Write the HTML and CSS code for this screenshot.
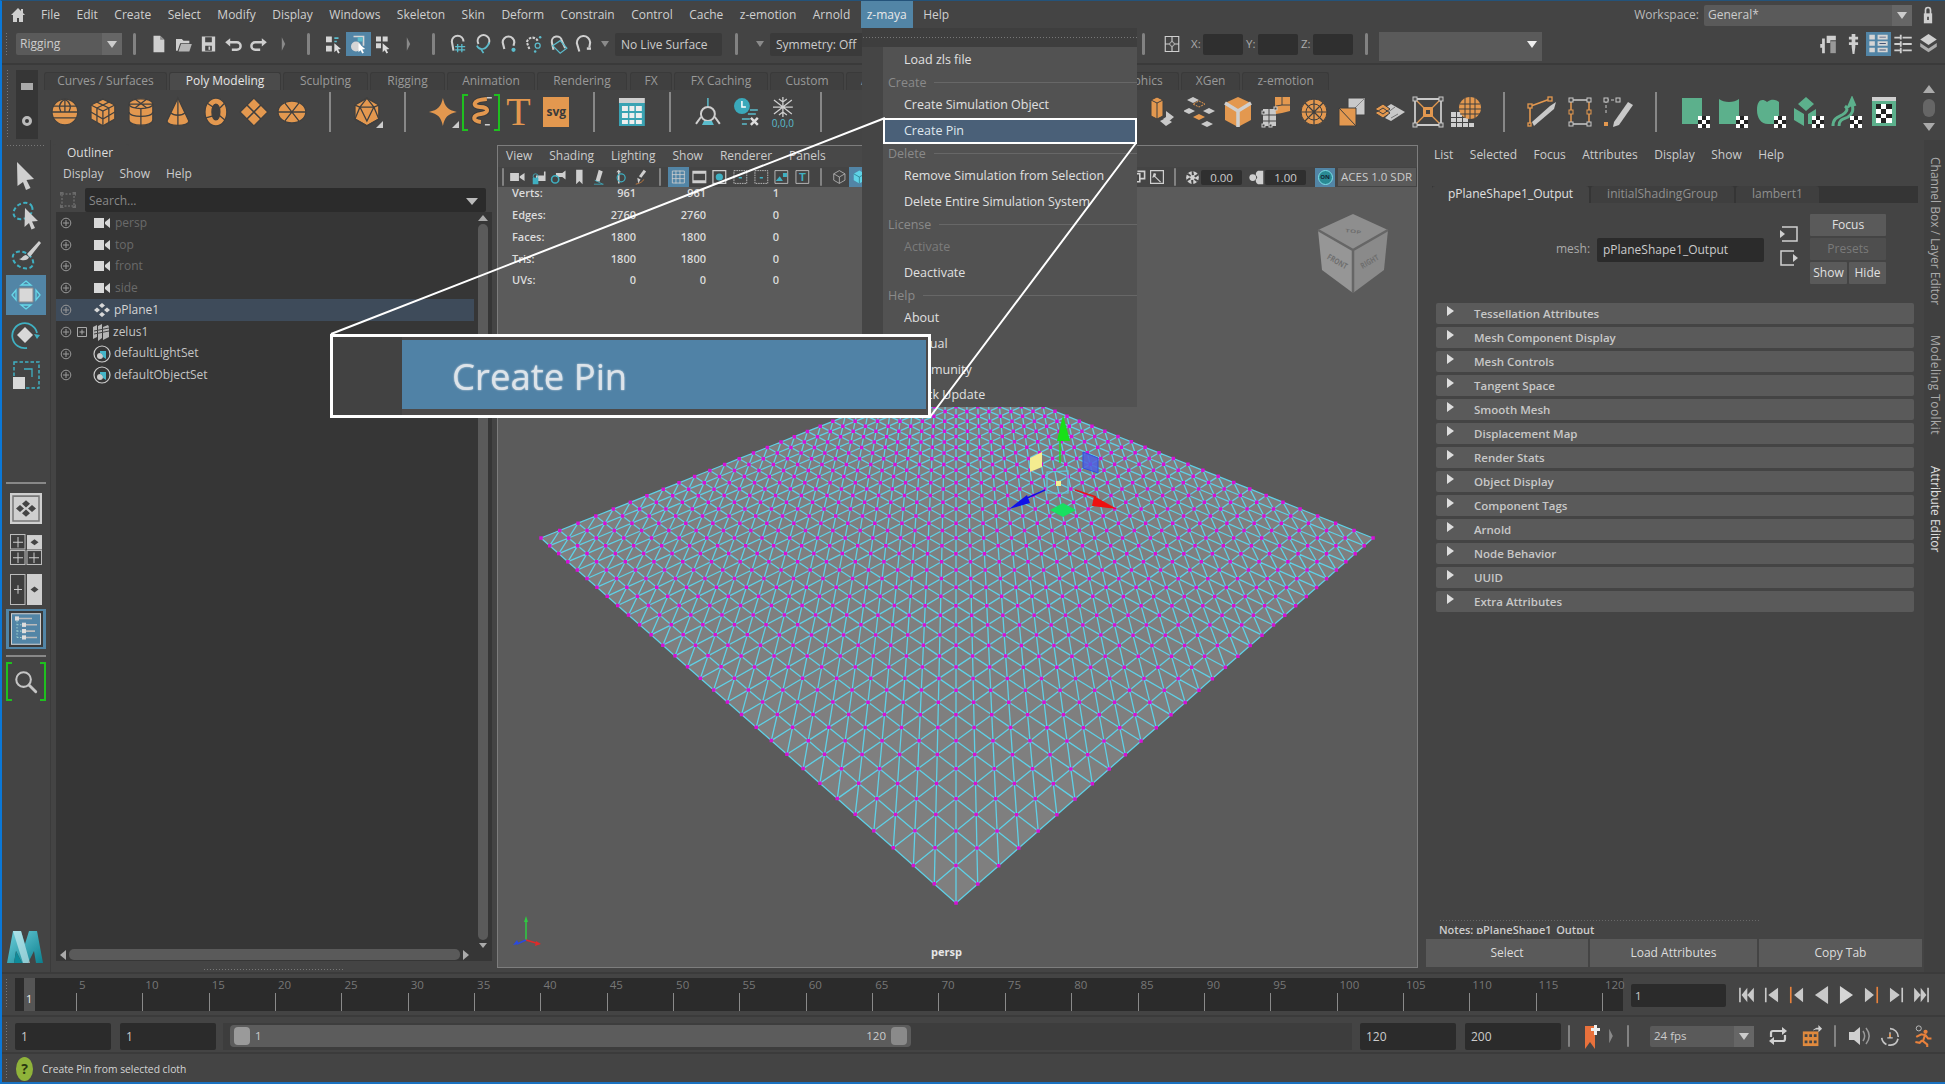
FILE: index.html
```html
<!DOCTYPE html>
<html lang="en">
<head>
<meta charset="utf-8">
<title>Autodesk Maya</title>
<link rel="stylesheet" href="styles.css">
</head>
<body>
<svg class="defs" aria-hidden="true">
<defs>
<linearGradient id="mgrad" x1="0" y1="0" x2="1" y2="1"><stop offset="0" stop-color="#6fd0dc"/><stop offset="1" stop-color="#0b7f8e"/></linearGradient>
</defs>
<symbol id="home" viewBox="0 0 16 16"><path fill="#cfcfcf" d="M8 1 1 8h2v7h4v-4h2v4h4V8h2l-2-2V2h-2v2z"/></symbol>
<symbol id="file" viewBox="0 0 24 24"><path fill="#cfcfcf" d="M6 2h8l5 5v15H6z"/><path fill="#8a8a8a" d="M14 2v5h5z"/></symbol>
<symbol id="open" viewBox="0 0 24 24"><path fill="#cfcfcf" d="M3 6h7l2 2h7v3H8l-3 9H3z"/><path fill="#b5b5b5" d="M9 12h13l-3 9H6z"/></symbol>
<symbol id="save" viewBox="0 0 24 24"><path fill="#cfcfcf" d="M4 3h16v18H4z"/><path fill="#444" d="M8 4h8v6H8zM8 14h8v6H8z"/><path fill="#cfcfcf" d="M12 15h2v4h-2z"/></symbol>
<symbol id="undo" viewBox="0 0 24 24"><path fill="none" stroke="#cfcfcf" stroke-width="3" d="M7 10h9a4 4 0 0 1 0 9h-6"/><path fill="#cfcfcf" d="M2 10l6-5v10z"/></symbol>
<symbol id="redo" viewBox="0 0 24 24"><path fill="none" stroke="#cfcfcf" stroke-width="3" d="M17 10H8a4 4 0 0 0 0 9h6"/><path fill="#cfcfcf" d="M22 10l-6-5v10z"/></symbol>
<symbol id="tri-r" viewBox="0 0 8 24"><path fill="#8a8a8a" d="M2 4l4 8-4 8z"/></symbol>
<symbol id="sel1" viewBox="0 0 24 24"><path fill="#d5d5d5" d="M3 3h7v7H3zM3 14h7v7H3z"/><path fill="#5bbccc" d="M13 4h5v2h-5zM13 8h3v2h-3z"/><path fill="#ddd" d="M13 11l8 7-3.500.5 2 4-2 1-2-4-2.500 2.500z"/></symbol>
<symbol id="sel2" viewBox="0 0 24 24"><path fill="none" stroke="#d5d5d5" stroke-width="2" d="M6 3h12v11"/><circle cx="9" cy="15" r="6" fill="#d5d5d5"/><path fill="#5bbccc" d="M11 4h6v5h-6z"/><path fill="#fff" d="M12 11l8 7-3.500.5 2 4-2 1-2-4-2.500 2.500z"/></symbol>
<symbol id="sel3" viewBox="0 0 24 24"><path fill="#d5d5d5" d="M3 3h6v6H3zM11 3h6v6h-6zM3 11h6v6H3z"/><path fill="#ddd" d="M11 11l8 7-3.500.5 2 4-2 1-2-4-2.500 2.500z"/></symbol>
<symbol id="magnet" viewBox="0 0 24 24"><path fill="none" stroke="#cfcfcf" stroke-width="2.500" d="M6 20 4 9a7 7 0 0 1 14 0"/><path fill="none" stroke="#5bbccc" stroke-width="1.500" d="M11 12v10M16 12v10M8 15h12M8 19h12"/></symbol>
<symbol id="magnet2" viewBox="0 0 24 24"><path fill="none" stroke="#cfcfcf" stroke-width="2.500" d="M6 12a7 7 0 1 1 12 0"/><path fill="none" stroke="#5bbccc" stroke-width="2" d="M4 14c3 6 11 6 15-4M9 18l3 5"/></symbol>
<symbol id="magnet3" viewBox="0 0 24 24"><path fill="none" stroke="#cfcfcf" stroke-width="2.500" d="M7 18 5 10a7 7 0 0 1 14 0l-1 4"/><circle cx="18" cy="19" r="2.500" fill="#5bbccc"/></symbol>
<symbol id="magnet4" viewBox="0 0 24 24"><path fill="none" stroke="#cfcfcf" stroke-width="2.500" stroke-dasharray="3 1.500" d="M7 18 4 10a7 7 0 0 1 13-2"/><circle cx="17" cy="14" r="3" fill="none" stroke="#5bbccc" stroke-width="1.500"/><circle cx="20" cy="4" r="1.500" fill="#5bbccc"/><circle cx="14" cy="21" r="1.500" fill="#5bbccc"/></symbol>
<symbol id="magnet5" viewBox="0 0 24 24"><path fill="none" stroke="#cfcfcf" stroke-width="2.500" d="M6 19 4 10a6 6 0 0 1 12-2l4 9"/><path fill="none" stroke="#5bbccc" stroke-width="1.500" d="M5 14l9-6 8 9-8 6z"/></symbol>
<symbol id="magnet6" viewBox="0 0 24 24"><path fill="none" stroke="#cfcfcf" stroke-width="2.500" d="M7 21 4 11a8 8 0 0 1 16-1l-1 6"/><path fill="#cfcfcf" d="M16 16h5v3h-5z"/></symbol>
<symbol id="coord" viewBox="0 0 24 24"><path fill="none" stroke="#cfcfcf" stroke-width="1.500" d="M3 2h18v20H3zM3 12h18M12 2v20"/><circle cx="12" cy="12" r="3" fill="#444" stroke="#cfcfcf"/></symbol>
<symbol id="panel1" viewBox="0 0 24 24"><path fill="#cfcfcf" d="M10 3h10v5h-6v3h-4zM5 6h3v16H5V16H3v-4h2z"/><path fill="#999" d="M14 9h6v13h-6z"/></symbol>
<symbol id="panel2" viewBox="0 0 24 24"><path fill="#cfcfcf" d="M10 1h4v3h3v3h-3v3h3v3h-3v2l-1 8h-2l-1-8v-2H7v-3h3V7H7V4h3z"/></symbol>
<symbol id="panel3" viewBox="0 0 24 24"><path fill="#d5d5d5" d="M2 2h6v5H2zM2 9h6v5H2zM2 16h6v5H2zM11 2h11v5H11zM11 9h11v5H11zM11 16h11v5H11z"/><path fill="#457" d="M13 4h7v1h-7zM13 11h7v1h-7zM13 18h7v1h-7z"/></symbol>
<symbol id="panel4" viewBox="0 0 24 24"><path fill="#cfcfcf" d="M2 4h6v2H2zM11 4h10v2H11zM2 11h6v2H2zM11 11h10v2H11zM2 18h6v2H2zM11 18h10v2H11zM8 2v5h2V2zM8 9v6h2V9zM8 16v6h2v-6z"/></symbol>
<symbol id="panel5" viewBox="0 0 24 24"><path fill="#cfcfcf" d="M12 1l9 6-9 6-9-6z"/><path fill="#aaa" d="M3 11l9 6 9-6v4l-9 6-9-6z"/></symbol>
<symbol id="lock" viewBox="0 0 14 24"><path fill="none" stroke="#cfcfcf" stroke-width="2" d="M4 11V6a3 3 0 0 1 6 0v5"/><path fill="#cfcfcf" d="M2 10h10v12H2z"/><path fill="#444" d="M6 14h2v4H6z"/></symbol>

<symbol id="p-sphere" viewBox="0 0 32 32"><g fill="#e3984f" stroke="#3f3f3f" stroke-width="1.300"><circle cx="16" cy="16" r="13"/><path fill="none" d="M4 10h24M3 16h26M4 22h24M16 3c-6 4-7 8-4 13M16 3c6 4 7 8 4 13M16 3v13"/></g></symbol>
<symbol id="p-cube" viewBox="0 0 32 32"><g fill="#e3984f" stroke="#3f3f3f" stroke-width="1.300"><path d="M16 3l12 6v14l-12 7-12-7V9z"/><path fill="none" d="M4 9l12 6 12-6M16 15v15M10 6l12 6M22 6 10 12M4 16l12 7 12-7M10 12v15M22 12v15"/></g></symbol>
<symbol id="p-cyl" viewBox="0 0 32 32"><g fill="#e3984f" stroke="#3f3f3f" stroke-width="1.300"><path d="M4 8c0-7 24-7 24 0v16c0 7-24 7-24 0z"/><path fill="none" d="M4 8c0 6 24 6 24 0M4 16c0 6 24 6 24 0M4 8l24 0M10 3l12 9M22 3 10 12M16 12v19"/></g></symbol>
<symbol id="p-cone" viewBox="0 0 32 32"><g fill="#e3984f" stroke="#3f3f3f" stroke-width="1.300"><path d="M16 2 27 25c0 6-22 6-22 0z"/><path fill="none" d="M16 2v28M9 17c3 3 11 3 14 0"/></g></symbol>
<symbol id="p-torus" viewBox="0 0 32 32"><g fill="#e3984f" stroke="#3f3f3f" stroke-width="1.300"><ellipse cx="16" cy="16" rx="11" ry="14"/><ellipse cx="16" cy="16" rx="4" ry="8" fill="#3f3f3f"/><path fill="none" d="M7 7l6 4M25 7l-5 5M6 22l7-2M25 24l-6-5"/></g></symbol>
<symbol id="p-plane" viewBox="0 0 32 32"><g fill="#e3984f" stroke="#3f3f3f" stroke-width="1.300"><path d="M16 2l14 14-14 14L2 16z"/><path fill="none" stroke-width="1.600" d="M9 9l14 14M23 9 9 23"/></g></symbol>
<symbol id="p-disc" viewBox="0 0 32 32"><g fill="#e3984f" stroke="#3f3f3f" stroke-width="1.300"><ellipse cx="16" cy="16" rx="14" ry="11"/><path fill="none" d="M2 16h28M9 7l14 18M23 7 9 25"/></g></symbol>
<symbol id="p-ico" viewBox="0 0 32 32"><g fill="#e3984f" stroke="#3f3f3f" stroke-width="1.300"><path d="M16 2l12 7v14l-12 7-12-7V9z"/><path fill="none" d="M16 2 9 11h14zM9 11 16 25l7-14M4 9l5 2-5 12 12 7 12-7-5-12 5-2"/></g></symbol>
<symbol id="p-star" viewBox="0 0 32 32"><path fill="#e3984f" d="M16 2c2 9 5 12 14 14-9 2-12 5-14 14-2-9-5-12-14-14 9-2 12-5 14-14z"/></symbol>
<symbol id="p-helix" viewBox="0 0 32 32"><path fill="none" stroke="#3a3a3a" stroke-width="6" d="M22 3C6 4 8 11 15 11c9 0 10 6 1 7-8 1-10 7 0 8"/><path fill="none" stroke="#e3984f" stroke-width="4" d="M22 3C6 4 8 11 15 11c9 0 10 6 1 7-8 1-10 7 0 8"/><path fill="#cfcfcf" d="M20 28h5v1.500h-5zM22 1h5v1.500h-5z"/></symbol>
<symbol id="p-table" viewBox="0 0 32 32"><path fill="#cfcfcf" d="M3 2h26v5H3z"/><path fill="#3aa3b3" d="M3 7h26v23H3z"/><path fill="#eee" d="M6 10h6v5H6zM13.500 10h5v5h-5zM20 10h6v5h-6zM6 17h6v5H6zM13.500 17h5v5h-5zM20 17h6v5h-6zM6 24h6v4H6zM13.500 24h5v4h-5zM20 24h6v4h-6z"/></symbol>
<symbol id="p-bio" viewBox="0 0 32 32"><path fill="none" stroke="#5bbccc" stroke-width="1.500" d="M16 2v10"/><circle cx="16" cy="18" r="7" fill="none" stroke="#cfcfcf" stroke-width="2"/><path fill="none" stroke="#cfcfcf" stroke-width="2" d="M9 21l-5 7M23 21l5 7"/><path fill="#5bbccc" d="M12 25h8l2 4H10z"/></symbol>
<symbol id="p-clock" viewBox="0 0 32 32"><circle cx="12" cy="10" r="8" fill="#3aa9bb"/><path fill="none" stroke="#fff" stroke-width="1.500" d="M12 5v6h4"/><path fill="none" stroke="#5bbccc" stroke-width="1.500" d="M20 14h8M18 18h8M12 23h8M12 28h5"/><path fill="none" stroke="#ddd" stroke-width="2.500" d="M21 22l7 7M28 22l-7 7"/></symbol>
<symbol id="p-snow" viewBox="0 0 32 32"><path fill="none" stroke="#cfcfcf" stroke-width="1.300" d="M16 1v20M7 4l18 14M25 4 7 18M6 11h20M12 3l4 3 4-3M12 19l4-3 4 3"/><text x="16" y="31" text-anchor="middle" font-family="Open Sans" font-size="10" fill="#5bbccc">0,0,0</text></symbol>
<symbol id="r-a" viewBox="0 0 32 32"><path fill="#e3984f" stroke="#3f3f3f" d="M5 4l6-3 6 3v16l-6 3-6-3z"/><path fill="none" stroke="#3f3f3f" d="M5 4l6 3 6-3M11 7v16"/><path fill="#c9c9c9" d="M20 15l8 6-6 5-5-3 3-2zM14 25l6-3 6 4-6 4z"/></symbol>
<symbol id="r-b" viewBox="0 0 32 32"><path fill="#c9c9c9" d="M9 1l6 3-6 3-6-3zM5 12l6 3-6 3-6-3zM25 12l6 3-6 3-6-3zM23 25l6 3-6 3-6-3z"/><path fill="#e3984f" d="M15 18l6 3-6 3-6-3z"/><path fill="none" stroke="#e3984f" stroke-dasharray="2 1" d="M15 5l6 3-6 3-6-3z"/></symbol>
<symbol id="r-c" viewBox="0 0 32 32"><path fill="#e3984f" d="M16 1l13 6v17l-13 7-13-7V7z"/><path fill="none" stroke="#cfcfcf" stroke-width="3.500" d="M3 7l13 8 13-8M16 15v16"/></symbol>
<symbol id="r-d" viewBox="0 0 32 32"><path fill="#c9c9c9" d="M3 13h13v17H3z"/><path fill="none" stroke="#444" d="M3 19h13M3 25h13M9 13v17"/><path fill="#e3984f" d="M15 1h15v14l-8 2-6 1-1-10zM22 1"/><path fill="none" stroke="#444" d="M22 1v8l-6 1M22 9h8"/><g fill="#444" stroke="#cfcfcf"><rect x="2" y="15" width="3" height="3"/><rect x="2" y="28" width="3" height="3"/><rect x="9" y="28" width="3" height="3"/><rect x="14" y="11" width="3" height="3"/></g></symbol>
<symbol id="r-e" viewBox="0 0 32 32"><circle cx="16" cy="16" r="13" fill="#e3984f" stroke="#3f3f3f"/><circle cx="16" cy="16" r="8" fill="none" stroke="#3f3f3f"/><path fill="none" stroke="#3f3f3f" stroke-width="1.200" d="M3 16h26M16 3v26M7 7l18 18M25 7 7 25"/></symbol>
<symbol id="r-f" viewBox="0 0 32 32"><path fill="#c9c9c9" stroke="#3f3f3f" d="M12 2h17v17H12z"/><path fill="none" stroke="#888" d="M12 19 29 2"/><path fill="#e3984f" stroke="#3f3f3f" d="M3 12h17v18H3z"/><path fill="none" stroke="#3f3f3f" d="M3 12l17 18"/></symbol>
<symbol id="r-g" viewBox="0 0 32 32"><path fill="#c9c9c9" d="M17 8l14 8-14 9-6-3 3-3-3-2 3-2-3-3z"/><path fill="none" stroke="#777" d="M21 11l-8 6M24 18l-7 4"/><path fill="#e3984f" stroke="#3f3f3f" d="M1 17l8-5 7 5-7 5zM1 13l8-5 7 5-7 5z"/></symbol>
<symbol id="r-h" viewBox="0 0 32 32"><path fill="none" stroke="#c9c9c9" stroke-width="1.800" d="M3 3h26v26H3z"/><path fill="none" stroke="#e3984f" stroke-width="1.300" d="M4 4l8 8M28 4l-8 8M4 28l8-8M28 28l-8-8"/><path fill="#e3984f" d="M11 11h10v10H11z"/><path fill="#444" d="M14 14h4v4h-4z"/><g fill="#555" stroke="#c9c9c9"><rect x="1" y="1" width="4" height="4"/><rect x="27" y="1" width="4" height="4"/><rect x="1" y="27" width="4" height="4"/><rect x="27" y="27" width="4" height="4"/></g></symbol>
<symbol id="r-i" viewBox="0 0 32 32"><path fill="#d0d0d0" d="M1 16h5v5H1zM7 16h5v5H7zM1 22h5v4H1zM7 22h5v4H7zM13 22h5v4h-5zM1 27h5v4H1zM7 27h5v4H7zM13 27h5v4h-5zM19 27h5v4h-5z"/><circle cx="20" cy="12" r="11" fill="#e3984f"/><path fill="none" stroke="#3f3f3f" d="M10 8h20M9 13h22M10 18h20M15 2v20M20 1v22M25 2v20"/></symbol>
<symbol id="r-j" viewBox="0 0 32 32"><path fill="none" stroke="#e3984f" stroke-width="1.600" d="M5 10 24 3M4 10v20"/><path fill="#c9c9c9" d="M6 26 24 10l6-4-2 7-20 17z"/><g fill="#444" stroke="#e3984f" stroke-width="1.300"><rect x="2" y="8" width="4" height="4"/><rect x="22" y="1" width="4" height="4"/><rect x="2" y="27" width="3" height="3"/></g></symbol>
<symbol id="r-k" viewBox="0 0 32 32"><path fill="none" stroke="#c9c9c9" stroke-width="1.500" d="M9 4h14M9 28h14"/><path fill="none" stroke="#e3984f" stroke-width="1.500" d="M7 4v24M25 4v24"/><g fill="#444" stroke="#c9c9c9"><rect x="5" y="2" width="4" height="4"/><rect x="23" y="2" width="4" height="4"/><rect x="5" y="26" width="4" height="4"/><rect x="23" y="26" width="4" height="4"/><rect x="5" y="14" width="4" height="4" stroke="#e3984f"/><rect x="23" y="14" width="4" height="4" stroke="#e3984f"/></g></symbol>
<symbol id="r-l" viewBox="0 0 32 32"><path fill="none" stroke="#c9c9c9" stroke-dasharray="3 2" d="M4 4h12M4 4v14"/><g fill="#444" stroke="#c9c9c9"><rect x="2" y="2" width="4" height="4"/><rect x="14" y="2" width="4" height="4"/></g><path fill="#e3984f" d="M2 26h4v4H2z"/><path fill="#c9c9c9" d="M12 26 26 6l5 3-14 20-6 2z"/></symbol>
<symbol id="g-a" viewBox="0 0 32 32"><path fill="#5cb08c" d="M4 2h20v26H4z"/><path fill="#fff" d="M20 20h4v4h-4zM28 20h4v4h-4zM24 24h4v4h-4zM20 28h4v4h-4zM28 28h4v4h-4z"/><path fill="#222" d="M24 20h4v4h-4zM20 24h4v4h-4zM28 24h4v4h-4zM24 28h4v4h-4z"/></symbol>
<symbol id="g-b" viewBox="0 0 32 32"><path fill="#5cb08c" d="M3 3c5 4 15 4 20 0v25H3z"/><path fill="#fff" d="M20 20h4v4h-4zM28 20h4v4h-4zM24 24h4v4h-4zM20 28h4v4h-4zM28 28h4v4h-4z"/><path fill="#222" d="M24 20h4v4h-4zM20 24h4v4h-4zM28 24h4v4h-4zM24 28h4v4h-4z"/></symbol>
<symbol id="g-c" viewBox="0 0 32 32"><path fill="#5cb08c" d="M3 14C3 4 8 2 13 6c5-4 10-2 12 0v22H14C7 28 3 22 3 14z"/><path fill="#fff" d="M20 20h4v4h-4zM28 20h4v4h-4zM24 24h4v4h-4zM20 28h4v4h-4zM28 28h4v4h-4z"/><path fill="#222" d="M24 20h4v4h-4zM20 24h4v4h-4zM28 24h4v4h-4zM24 28h4v4h-4z"/></symbol>
<symbol id="g-d" viewBox="0 0 32 32"><path fill="#5cb08c" d="M14 1l8 7-8 7-8-7zM2 12l10 6v12L2 24zM16 18l8-5v7h-4v8h-4z"/><path fill="#fff" d="M20 20h4v4h-4zM28 20h4v4h-4zM24 24h4v4h-4zM20 28h4v4h-4zM28 28h4v4h-4z"/><path fill="#222" d="M24 20h4v4h-4zM20 24h4v4h-4zM28 24h4v4h-4zM24 28h4v4h-4z"/></symbol>
<symbol id="g-e" viewBox="0 0 32 32"><path fill="none" stroke="#5cb08c" stroke-width="3" d="M3 30c0-8 5-9 9-11s7-6 3-9M9 30c0-7 5-7 9-9 4-3 6-6 4-13l-3 2 3-7 3 7"/><path fill="#fff" d="M20 20h4v4h-4zM28 20h4v4h-4zM24 24h4v4h-4zM20 28h4v4h-4zM28 28h4v4h-4z"/><path fill="#222" d="M24 20h4v4h-4zM20 24h4v4h-4zM28 24h4v4h-4zM24 28h4v4h-4z"/></symbol>
<symbol id="g-f" viewBox="0 0 32 32"><path fill="#cfcfcf" d="M4 1h24v4H4z"/><path fill="#5cb08c" d="M4 5h24v25H4z"/><path fill="#fff" d="M8 8h16v19H8z"/><path fill="#222" d="M8 8h5v5H8zM18 8h6v5h-6zM13 13h5v5h-5zM8 18h5v4H8zM18 18h6v4h-6zM13 22h5v5h-5z"/></symbol>

<symbol id="cam" viewBox="0 0 16 10"><path fill="#d8d8d8" d="M0 0h10v10H0zM11 4l5-4v10l-5-4z"/></symbol>
<symbol id="plane" viewBox="0 0 18 14"><path fill="#d8d8d8" d="M9 0l3 2.500L9 5 6 2.500zM4 4.500 7 7 4 9.500 1 7zM14 4.500 17 7l-3 2.500L11 7zM9 9l3 2.500L9 14l-3-2.500z"/></symbol>
<symbol id="zelus" viewBox="0 0 18 18"><path fill="#b5b5b5" d="M1 4l4-2v12l-4 2zM6 3l4-2v14l-4 3zM11 4l5-2 1 2v10l-6 3z"/><path fill="none" stroke="#444" d="M2 8l15-3M2 11l15-3"/></symbol>
<symbol id="set" viewBox="0 0 18 18"><circle cx="9" cy="9" r="8" fill="none" stroke="#ccc" stroke-width="1.200"/><circle cx="7" cy="11" r="3" fill="#ccc"/><path fill="#45b5c8" d="M7 6h6v8l-3-2a4 4 0 0 0-3-4z"/></symbol>
<symbol id="pluscirc" viewBox="0 0 12 12"><circle cx="6" cy="6" r="4.800" fill="none" stroke="#999"/><path stroke="#999" d="M6 3v6M3 6h6"/></symbol>
<symbol id="plusbox" viewBox="0 0 12 12"><path fill="none" stroke="#aaa" d="M1.500 1.500h9v9h-9zM6 3.500v5M3.500 6h5"/></symbol>
<symbol id="focus" viewBox="0 0 18 18"><path fill="none" stroke="#6a6a6a" stroke-width="1.500" stroke-dasharray="2 1.500" d="M3 3h12v12H3z"/><path fill="#6a6a6a" d="M1 1l4 0-4 4zM17 1v4l-4-4zM1 17v-4l4 4zM17 17h-4l4-4z"/></symbol>

<symbol id="t-arrow" viewBox="0 0 32 32"><path fill="#cfcfcf" d="M7 3 24 20l-7.500 1 4 8-4.500 2-3-8-5.500 4z"/></symbol>
<symbol id="t-lasso" viewBox="0 0 32 32"><ellipse cx="13" cy="12" rx="10" ry="7.500" transform="rotate(-30 13 12)" fill="none" stroke="#3fb0c2" stroke-width="2" stroke-dasharray="4 2.500"/><path fill="#cfcfcf" d="M15 9l13 13-6 .6 3 6.400-3.500 1.500-2.500-6.500-4.500 4z"/></symbol>
<symbol id="t-paint" viewBox="0 0 32 32"><ellipse cx="13" cy="21" rx="11" ry="7.500" transform="rotate(30 13 21)" fill="none" stroke="#3fb0c2" stroke-width="2" stroke-dasharray="4 2.500"/><path fill="#cfcfcf" d="M29 2 17 15l3 3L31 4zM16 16c-3 0-4 4-7 4 3 2 9 2 10-2z"/></symbol>
<symbol id="t-move" viewBox="0 0 32 32"><path fill="none" stroke="#66d7e8" stroke-width="1.300" d="M16 2l5 4H11zM16 30l5-4H11zM2 16l4-5v10zM30 16l-4-5v10z"/><path fill="#d8d8d8" stroke="#8a8a8a" d="M9 9h14v14H9z"/></symbol>
<symbol id="t-rot" viewBox="0 0 32 32"><path fill="none" stroke="#3fb0c2" stroke-width="1.800" d="M27 14A12.500 12.500 0 1 0 17 29"/><path fill="#3fb0c2" d="M30 16l-6-1 3 5z"/><path fill="#d8d8d8" d="M15 8l8 8-8 8-8-8z"/></symbol>
<symbol id="t-scale" viewBox="0 0 32 32"><path fill="none" stroke="#3fb0c2" stroke-width="1.500" stroke-dasharray="3.500 2" d="M4 3h25v26H4z"/><path fill="none" stroke="#3fb0c2" stroke-width="1.300" d="M14 10h8v8"/><path fill="#d8d8d8" d="M3 18h12v12H3z"/></symbol>
<symbol id="l-single" viewBox="0 0 32 30" preserveAspectRatio="none"><path fill="#cfcfcf" d="M0 0h32v30H0z"/><path fill="none" stroke="#777" stroke-width="1.500" d="M3 3h26v24H3z"/><path fill="#444" d="M16 7l4 3.500-4 3.500-4-3.500zM10 11.500l4 3.500-4 3.500-4-3.500zM22 11.500l4 3.500-4 3.500-4-3.500zM16 16l4 3.500-4 3.500-4-3.500z"/></symbol>
<symbol id="l-four" viewBox="0 0 32 30" preserveAspectRatio="none"><g fill="#3e3e3e" stroke="#bbb"><rect x=".5" y=".5" width="14.500" height="14"/><rect x=".5" y="16" width="14.500" height="13.500"/><rect x="17" y="16" width="14.500" height="13.500"/></g><path fill="#cfcfcf" d="M17 1h15v14H17z"/><path fill="#444" d="M24.500 5l4 3-4 3-4-3z"/><path stroke="#ccc" d="M8 3v10M3 8h10M8 18v10M3 23h10M24 18v10M19 23h10"/></symbol>
<symbol id="l-two" viewBox="0 0 32 30" preserveAspectRatio="none"><path fill="#3e3e3e" stroke="#bbb" d="M.5.5h14.500v29H.5z"/><path stroke="#ccc" d="M8 11v8M4 15h8"/><path fill="#cfcfcf" d="M17 0h15v30H17z"/><path fill="#444" d="M24.500 12l4 3-4 3-4-3z"/></symbol>
<symbol id="l-out" viewBox="0 0 40 38" preserveAspectRatio="none"><path fill="none" stroke="#3a3a3a" stroke-width="2" d="M4 3h32v32H4z"/><path fill="none" stroke="#cfcfcf" d="M5.500 4.500h29v29h-29z"/><path stroke="#bbb" stroke-width="1.500" d="M11 9h15M17 15h14M17 21h12M17 27h14"/><path stroke="#9cc" stroke-dasharray="1.500 1.500" d="M11 11v16M11 15h5M11 21h5M11 27h5"/><g fill="#ddd"><rect x="9" y="7" width="4" height="4"/><rect x="16" y="13" width="4" height="4"/><rect x="16" y="19" width="4" height="4"/><rect x="16" y="25" width="4" height="4"/></g></symbol>
<symbol id="search" viewBox="0 0 32 32"><circle cx="13" cy="13" r="9" fill="none" stroke="#c5c5c5" stroke-width="2.500"/><path stroke="#c5c5c5" stroke-width="3.500" stroke-linecap="round" d="M20 20l8 8"/></symbol>
<symbol id="mlogo" viewBox="0 0 36 32"><path fill="url(#mgrad)" d="M0 32 6 0h8l4 13 4-13h8l6 32h-7l-2-12-6 12h-6L9 20 7 32z"/><path fill="#0f8a99" d="M7 32 9 20l6 12z"/><path fill="#d8f2f5" opacity=".6" d="M6 0h8l9 32h-7z"/></symbol>

<symbol id="v1" viewBox="0 0 20 20"><path fill="#cfcfcf" d="M1 5h11v10H1zM13 9l6-4v10l-6-4z"/></symbol>
<symbol id="v2" viewBox="0 0 20 20"><path fill="#cfcfcf" d="M7 8h10V3h2v12H7zM7 8l-5 2"/><path fill="#3fb0c2" d="M3 11h7v8H3z"/><circle cx="6.500" cy="9" r="3" fill="none" stroke="#3fb0c2"/></symbol>
<symbol id="v3" viewBox="0 0 20 20"><path fill="#cfcfcf" d="M7 5h8l4-3v11l-4-3H7z"/><circle cx="6" cy="13" r="4.500" fill="none" stroke="#3fb0c2" stroke-width="2"/></symbol>
<symbol id="v4" viewBox="0 0 20 20"><path fill="#cfcfcf" d="M6 1h8v18l-4-4-4 4z"/></symbol>
<symbol id="v5" viewBox="0 0 20 20"><path fill="#cfcfcf" d="M8 1l5 2-4 13-5-1z"/><path fill="none" stroke="#3fb0c2" d="M2 19h12M3 14l10 5"/></symbol>
<symbol id="v6" viewBox="0 0 20 20"><path fill="#cfcfcf" d="M8 1l3 3H9v14H7V4H5z"/><circle cx="11" cy="11" r="5" fill="none" stroke="#3fb0c2" stroke-width="1.500"/></symbol>
<symbol id="v7" viewBox="0 0 20 20"><path fill="#cfcfcf" d="M13 1l3 2-6 8-3-2z"/><path fill="none" stroke="#d0803c" d="M3 19c5-1 9-3 10-6"/><path fill="#cfcfcf" d="M5 11l4 2-3 5z"/></symbol>
<symbol id="v8" viewBox="0 0 20 20"><path fill="none" stroke="#cfcfcf" d="M2.500 2.500h15v15h-15zM2 7h16M2 12h16M7 2v16M12 2v16"/></symbol>
<symbol id="v9" viewBox="0 0 20 20"><path fill="none" stroke="#cfcfcf" stroke-width="1.500" d="M2 3h16v14H2z"/><path fill="#cfcfcf" d="M2 3h16v3H2zM2 14h16v3H2z"/></symbol>
<symbol id="v10" viewBox="0 0 20 20"><path fill="none" stroke="#cfcfcf" stroke-width="1.500" d="M2 2h16v16H2z"/><circle cx="10" cy="10" r="4.500" fill="#3fb0c2"/></symbol>
<symbol id="v11" viewBox="0 0 20 20"><path fill="none" stroke="#cfcfcf" stroke-dasharray="2 1" d="M2 2h16v16H2z"/><path fill="#3fb0c2" d="M8 10h4v2H8z"/></symbol>
<symbol id="v12" viewBox="0 0 20 20"><path fill="none" stroke="#cfcfcf" d="M2 2h16v16H2z"/><path fill="#3fb0c2" d="M3 15l5-6 4 6zM12 5h5v5h-5z"/></symbol>
<symbol id="v13" viewBox="0 0 20 20"><path fill="none" stroke="#cfcfcf" d="M2 2h16v16H2z"/><text x="10" y="15" text-anchor="middle" font-family="Liberation Sans" font-size="14" font-weight="700" fill="#3fb0c2">T</text></symbol>
<symbol id="v14" viewBox="0 0 20 20"><path fill="none" stroke="#bbb" d="M10 2l7 4v8l-7 4-7-4V6zM3 6l7 4 7-4M10 10v8"/></symbol>
<symbol id="v15" viewBox="0 0 20 20"><path fill="#5fd3e6" d="M10 2l7 4v8l-7 4-7-4V6z"/><path fill="none" stroke="#2c7c8c" d="M3 6l7 4 7-4M10 10v8"/></symbol>
<symbol id="v-a" viewBox="0 0 20 20"><path fill="none" stroke="#cfcfcf" stroke-width="2" d="M2 6h9v10H2zM8 3h9v9h-5"/></symbol>
<symbol id="v-b" viewBox="0 0 20 20"><path fill="none" stroke="#cfcfcf" stroke-width="1.500" d="M2 2h16v16H2z"/><path fill="#cfcfcf" d="M6 5l3 1-1 3 7 7-1 1-7-7-3 1z"/></symbol>
<symbol id="v-ap" viewBox="0 0 20 20"><circle cx="10" cy="10" r="8.500" fill="#d0d0d0"/><path fill="#444" d="M9 1.500h2l1 5-3 .5zM17 5l1 2-4 3-2-2zM18 14l-2 2-4-3 1-2zM11 18.500H9l-1-5 3-.5zM3 15l-1-2 4-3 2 2zM2 6l2-2 4 3-1 2z"/></symbol>
<symbol id="v-g" viewBox="0 0 20 20"><path fill="#d0d0d0" d="M12 1h7v18h-7c-3-2-3-4-3-5 0-2 2-3 2-4s-2-3-2-4c0-2 1-4 3-5z"/><circle cx="5" cy="10" r="4.500" fill="#d0d0d0"/></symbol>
<symbol id="ae-l" viewBox="0 0 20 18"><path fill="none" stroke="#cfcfcf" stroke-width="1.500" d="M3 2h15v14H3"/><path fill="#cfcfcf" d="M1 5l5 4-5 4z"/></symbol>
<symbol id="ae-r" viewBox="0 0 20 18"><path fill="none" stroke="#cfcfcf" stroke-width="1.500" d="M15 2H2v14h13"/><path fill="#cfcfcf" d="M14 5l5 4-5 4z"/></symbol>
<symbol id="bm" viewBox="0 0 20 26"><path fill="#e8713c" d="M3 3h10v23l-5-7-5 7z"/><path fill="#eee" d="M12 2h3v3h3v3h-3v4h-3V8H9V5h3z"/></symbol>
<symbol id="loop" viewBox="0 0 22 20"><path fill="none" stroke="#d0d0d0" stroke-width="2.200" d="M4 11V7a2 2 0 0 1 2-2h11M18 9v4a2 2 0 0 1-2 2H5"/><path fill="#d0d0d0" d="M15 1l5 4-5 4zM7 11l-5 4 5 4z"/></symbol>
<symbol id="cache" viewBox="0 0 22 24"><path fill="#e08a3e" d="M1 7h17v16H1z"/><path fill="#444" d="M3 10h3v3H3zM8 10h3v3H8zM13 10h3v3h-3zM3 17h3v3H3zM8 17h3v3H8zM13 17h3v3h-3z"/><path fill="#d0d0d0" d="M12 6c2-3 5-3 6-3V0l4 4-4 4V5c-2 0-4 0-6 1z"/></symbol>
<symbol id="sound" viewBox="0 0 22 22"><path fill="#d0d0d0" d="M1 7h5l6-5v18l-6-5H1z"/><path fill="none" stroke="#999" stroke-width="1.500" d="M15 6c2 3 2 7 0 10M18 3c4 5 4 11 0 16"/></symbol>
<symbol id="timer" viewBox="0 0 22 24"><path fill="none" stroke="#c5c5c5" stroke-width="1.800" stroke-dasharray="14 2" d="M11 4a9 9 0 1 1-9 10"/><path stroke="#c5c5c5" stroke-width="1.500" d="M11 8v6M8 14h6"/><path fill="#e08a3e" d="M10 10h2v3h-2z"/></symbol>
<symbol id="runner" viewBox="0 0 22 26"><circle cx="6" cy="4" r="3" fill="none" stroke="#ccc"/><circle cx="14" cy="8" r="2.500" fill="#e8813c"/><path fill="none" stroke="#e8813c" stroke-width="2.500" d="M3 14l6-3 5 1 3 4 4 0M13 13l-2 6 5 4v3M10 18l-3 3-5-1"/></symbol>
<symbol id="b1" viewBox="0 0 22 22"><path fill="#c9c9c9" d="M2 2h2v18H2zM5 11l7-9v18zM12 11l8-9v18z"/></symbol>
<symbol id="b2" viewBox="0 0 22 22"><path fill="#c9c9c9" d="M3 2h2v18H3zM7 11l12-9v18z"/></symbol>
<symbol id="b3" viewBox="0 0 22 22"><path stroke="#e8813c" stroke-width="2" d="M4 1v20"/><path fill="#c9c9c9" d="M8 11l11-9v18z"/></symbol>
<symbol id="b4" viewBox="0 0 22 22"><path fill="#c9c9c9" d="M3 11 19 0v22z"/></symbol>
<symbol id="b5" viewBox="0 0 22 22"><path fill="#d5d5d5" d="M19 11 3 0v22z"/></symbol>
<symbol id="b6" viewBox="0 0 22 22"><path fill="#c9c9c9" d="M14 11 3 2v18z"/><path stroke="#e8813c" stroke-width="2" d="M18 1v20"/></symbol>
<symbol id="b7" viewBox="0 0 22 22"><path fill="#c9c9c9" d="M15 11 3 2v18zM17 2h2v18h-2z"/></symbol>
<symbol id="b8" viewBox="0 0 22 22"><path fill="#c9c9c9" d="M10 11 2 2v18zM17 11 10 2v18zM18 2h2v18h-2z"/></symbol>
</svg>

<div class="app">
  <header class="menubar">
    <svg class="home"><use href="#home"/></svg>
    <nav class="mainmenu">
      <span>File</span><span>Edit</span><span>Create</span><span>Select</span><span>Modify</span><span>Display</span><span>Windows</span><span>Skeleton</span><span>Skin</span><span>Deform</span><span>Constrain</span><span>Control</span><span>Cache</span><span>z-emotion</span><span>Arnold</span><span class="on">z-maya</span><span>Help</span>
    </nav>
    <div class="workspace">
      <span class="ws-label">Workspace:</span>
      <div class="combo ws-combo"><span>General*</span><i class="combo-arrow"></i></div>
      <svg class="ws-lock"><use href="#lock"/></svg>
    </div>
  </header>

  <section class="statusline">
    <div class="grip-v"></div>
    <div class="combo mode-combo"><span>Rigging</span><i class="combo-arrow"></i></div>
    <i class="sep"></i>
    <div class="st-icons">
      <svg><use href="#file"/></svg><svg><use href="#open"/></svg><svg><use href="#save"/></svg><svg><use href="#undo"/></svg><svg><use href="#redo"/></svg>
      <svg class="tiny"><use href="#tri-r"/></svg><i class="sep sep-slot"></i>
      <svg><use href="#sel1"/></svg><svg class="sel"><use href="#sel2"/></svg><svg><use href="#sel3"/></svg>
      <svg class="tiny"><use href="#tri-r"/></svg><i class="sep sep-slot"></i>
      <svg><use href="#magnet"/></svg><svg><use href="#magnet2"/></svg><svg><use href="#magnet3"/></svg><svg><use href="#magnet4"/></svg><svg><use href="#magnet5"/></svg><svg><use href="#magnet6"/></svg>
    </div>
    <i class="mini-down"></i>
    <div class="dark-box live">No Live Surface</div>
    <i class="sep sep-live"></i>
    <i class="mini-down mini-sym"></i>
    <div class="dark-box sym">Symmetry: Off</div>
    <div class="st-right">
      <i class="sep"></i>
      <svg class="coord"><use href="#coord"/></svg>
      <span class="xyz">X:</span><i class="xyz-box"></i>
      <span class="xyz">Y:</span><i class="xyz-box"></i>
      <span class="xyz">Z:</span><i class="xyz-box"></i>
      <i class="sep sep-xyz"></i>
      <div class="big-combo"><i class="big-arrow"></i></div>
      <div class="panel-icons">
        <svg><use href="#panel1"/></svg><svg><use href="#panel2"/></svg><svg class="sel"><use href="#panel3"/></svg><svg><use href="#panel4"/></svg><svg><use href="#panel5"/></svg>
      </div>
    </div>
  </section>

  <section class="shelf">
    <div class="grip-v grip-tall"></div>
    <div class="shelf-side"><i class="hamb"></i><i class="gear"></i></div>
    <div class="shelf-main">
      <div class="tabs">
        <span class="w123">Curves / Surfaces</span><span class="on w112">Poly Modeling</span><span class="w85">Sculpting</span><span class="w75">Rigging</span><span class="w88">Animation</span><span class="w90">Rendering</span><span class="w42">FX</span><span class="w94">FX Caching</span><span class="w74">Custom</span><span class="pad">Arnold</span><span class="hid">Bifrost</span><span class="hid">MASH</span><span class="mg">Motion Graphics</span><span class="pad">XGen</span><span class="pad">z-emotion</span>
      </div>
      <div class="shelf-icons">
        <svg><use href="#p-sphere"/></svg><svg><use href="#p-cube"/></svg><svg><use href="#p-cyl"/></svg><svg><use href="#p-cone"/></svg><svg><use href="#p-torus"/></svg><svg><use href="#p-plane"/></svg><svg><use href="#p-disc"/></svg>
        <i class="sh-sep"></i>
        <div class="opt"><svg><use href="#p-ico"/></svg></div>
        <i class="sh-sep"></i>
        <div class="opt"><svg><use href="#p-star"/></svg></div>
        <div class="bracket"><svg><use href="#p-helix"/></svg></div>
        <span class="sh-t">T</span>
        <span class="sh-svg">svg</span>
        <i class="sh-sep"></i>
        <svg><use href="#p-table"/></svg>
        <i class="sh-sep"></i>
        <svg><use href="#p-bio"/></svg><svg><use href="#p-clock"/></svg><svg><use href="#p-snow"/></svg>
        <i class="sh-sep"></i>
        <div class="sh-right">
          <svg><use href="#r-a"/></svg><svg><use href="#r-b"/></svg><svg><use href="#r-c"/></svg><svg><use href="#r-d"/></svg><svg><use href="#r-e"/></svg><svg><use href="#r-f"/></svg><svg><use href="#r-g"/></svg><svg><use href="#r-h"/></svg><svg><use href="#r-i"/></svg>
          <i class="sh-sep"></i>
          <svg><use href="#r-j"/></svg><svg><use href="#r-k"/></svg><svg><use href="#r-l"/></svg>
          <i class="sh-sep"></i>
          <svg><use href="#g-a"/></svg><svg><use href="#g-b"/></svg><svg><use href="#g-c"/></svg><svg><use href="#g-d"/></svg><svg><use href="#g-e"/></svg><svg><use href="#g-f"/></svg>
        </div>
      </div>
    </div>
    <div class="shelf-scroll"><i class="up"></i><i class="knob"></i><i class="down"></i></div>
  </section>

  <main class="work">
    <aside class="toolbox">
      <div class="grip-h"></div>
      <div class="tool"><svg><use href="#t-arrow"/></svg></div>
      <div class="tool"><svg><use href="#t-lasso"/></svg></div>
      <div class="tool"><svg><use href="#t-paint"/></svg></div>
      <div class="tool sel"><svg><use href="#t-move"/></svg></div>
      <div class="tool"><svg><use href="#t-rot"/></svg></div>
      <div class="tool"><svg><use href="#t-scale"/></svg></div>
      <hr class="tool-rule rule-a">
      <svg class="lay"><use href="#l-single"/></svg>
      <svg class="lay"><use href="#l-four"/></svg>
      <svg class="lay"><use href="#l-two"/></svg>
      <div class="lay-out"><svg><use href="#l-out"/></svg></div>
      <hr class="tool-rule rule-b">
      <div class="search-btn"><svg><use href="#search"/></svg></div>
      <svg class="mlogo"><use href="#mlogo"/></svg>
    </aside>

    <section class="outliner">
      <div class="panel-tab">Outliner</div>
      <div class="out-body">
        <div class="out-menu"><span>Display</span><span>Show</span><span>Help</span></div>
        <div class="out-search">
          <svg><use href="#focus"/></svg>
          <div class="search-field"><span>Search...</span><i class="search-arrow"></i></div>
        </div>
        <div class="out-list-wrap">
          <ul class="out-list">
            <li class="dim"><svg class="pc"><use href="#pluscirc"/></svg><svg class="ic"><use href="#cam"/></svg>persp</li>
            <li class="dim"><svg class="pc"><use href="#pluscirc"/></svg><svg class="ic"><use href="#cam"/></svg>top</li>
            <li class="dim"><svg class="pc"><use href="#pluscirc"/></svg><svg class="ic"><use href="#cam"/></svg>front</li>
            <li class="dim"><svg class="pc"><use href="#pluscirc"/></svg><svg class="ic"><use href="#cam"/></svg>side</li>
            <li class="sel"><svg class="pc"><use href="#pluscirc"/></svg><svg class="ic"><use href="#plane"/></svg>pPlane1</li>
            <li class="exp"><svg class="pc"><use href="#pluscirc"/></svg><svg class="pb"><use href="#plusbox"/></svg><svg class="ic ic-z"><use href="#zelus"/></svg>zelus1</li>
            <li><svg class="pc"><use href="#pluscirc"/></svg><svg class="ic"><use href="#set"/></svg>defaultLightSet</li>
            <li><svg class="pc"><use href="#pluscirc"/></svg><svg class="ic"><use href="#set"/></svg>defaultObjectSet</li>
          </ul>
          <div class="vscroll"><i class="sc-up"></i><i class="sc-thumb"></i><i class="sc-down"></i></div>
        </div>
        <div class="hscroll"><i class="sc-left"></i><i class="sc-hthumb"></i><i class="sc-right"></i></div>
        <div class="grip-h grip-out"></div>
      </div>
    </section>

    <section class="viewport">
      <div class="vp-menu"><span>View</span><span>Shading</span><span>Lighting</span><span>Show</span><span>Renderer</span><span>Panels</span></div>
      <div class="vp-tools">
        <i class="sep"></i>
        <div class="vp-icons">
          <svg><use href="#v1"/></svg><svg><use href="#v2"/></svg><svg><use href="#v3"/></svg><svg><use href="#v4"/></svg><svg><use href="#v5"/></svg><svg><use href="#v6"/></svg><svg><use href="#v7"/></svg>
          <i class="sep"></i>
          <svg class="sel"><use href="#v8"/></svg><svg><use href="#v9"/></svg><svg><use href="#v10"/></svg><svg><use href="#v11"/></svg><svg><use href="#v11"/></svg><svg><use href="#v12"/></svg><svg><use href="#v13"/></svg>
          <i class="sep"></i>
          <svg><use href="#v14"/></svg><svg class="sel"><use href="#v15"/></svg>
        </div>
        <div class="vp-right">
          <svg><use href="#v-a"/></svg><svg><use href="#v-b"/></svg>
          <i class="sep"></i>
          <svg class="ap"><use href="#v-ap"/></svg><span class="num">0.00</span>
          <svg class="ap"><use href="#v-g"/></svg><span class="num">1.00</span>
          <span class="on-btn"><b>ON</b></span>
          <span class="aces">ACES 1.0 SDR</span>
        </div>
      </div>
      <div class="vp-scene">
        <svg class="mesh" id="mesh" width="919" height="781" viewBox="0 0 919 781"></svg>
        <table class="hud">
          <tr><th>Verts:</th><td>961</td><td>961</td><td>1</td></tr>
          <tr><th>Edges:</th><td>2760</td><td>2760</td><td>0</td></tr>
          <tr><th>Faces:</th><td>1800</td><td>1800</td><td>0</td></tr>
          <tr><th>Tris:</th><td>1800</td><td>1800</td><td>0</td></tr>
          <tr><th>UVs:</th><td>0</td><td>0</td><td>0</td></tr>
        </table>
        <svg class="cube" viewBox="0 0 76 82">
          <path fill="#8e8e8e" d="M37 1 72 17 37 37 2 17z"/>
          <path fill="#969696" d="M2 17 37 37 37 80 6 57z"/>
          <path fill="#8a8a8a" d="M37 37 72 17 68 57 37 80z"/>
          <path fill="none" stroke="#666" stroke-width="2.500" d="M2 17 37 37 72 17M37 37v43"/>
          <text class="cube-t" transform="translate(37 20) rotate(8) scale(1 .6)">TOP</text>
          <text class="cube-t" transform="translate(20 51) rotate(30) scale(.8 1)">FRONT</text>
          <text class="cube-t" transform="translate(55 51) rotate(-30) scale(.8 1)">RIGHT</text>
        </svg>
        <svg class="axis" viewBox="0 0 30 30">
          <path stroke="#2ecc40" stroke-width="1.500" d="M14 24V4"/><path fill="#2ecc40" d="M14 0l2 6h-4z"/>
          <path stroke="#e02a2a" stroke-width="1.500" d="M14 24l10 3"/><path fill="#e02a2a" d="M29 28l-6 2 1-5z"/>
          <path stroke="#2a4ae0" stroke-width="1.500" d="M14 24l-9 4"/><path fill="#2a4ae0" d="M1 29l4-5 2 4z"/>
        </svg>
        <div class="cam-name">persp</div>
      </div>
    </section>

    <section class="attr">
      <div class="attr-menu"><span>List</span><span>Selected</span><span>Focus</span><span>Attributes</span><span>Display</span><span>Show</span><span>Help</span></div>
      <div class="attr-tabs"><span class="on">pPlaneShape1_Output</span><span>initialShadingGroup</span><span>lambert1</span></div>
      <div class="attr-head">
        <label>mesh:</label>
        <div class="mesh-field">pPlaneShape1_Output</div>
        <div class="nav-icons"><svg><use href="#ae-l"/></svg><svg><use href="#ae-r"/></svg></div>
        <div class="head-btns">
          <button>Focus</button>
          <button class="off">Presets</button>
          <div class="pair"><button>Show</button><button>Hide</button></div>
        </div>
      </div>
      <div class="frames">
        <div class="frame">Tessellation Attributes</div>
        <div class="frame">Mesh Component Display</div>
        <div class="frame">Mesh Controls</div>
        <div class="frame">Tangent Space</div>
        <div class="frame">Smooth Mesh</div>
        <div class="frame">Displacement Map</div>
        <div class="frame">Render Stats</div>
        <div class="frame">Object Display</div>
        <div class="frame">Component Tags</div>
        <div class="frame">Arnold</div>
        <div class="frame">Node Behavior</div>
        <div class="frame">UUID</div>
        <div class="frame">Extra Attributes</div>
      </div>
      <div class="notes"><div class="grip-h grip-notes"></div><div class="notes-clip"><span>Notes: pPlaneShape1_Output</span></div></div>
      <div class="attr-btns"><button>Select</button><button>Load Attributes</button><button>Copy Tab</button></div>
    </section>

    <aside class="sidetabs">
      <span class="s1">Channel Box / Layer Editor</span>
      <span class="s2">Modeling Toolkit</span>
      <span class="s3">Attribute Editor</span>
    </aside>
  </main>

  <section class="timeline">
    <div class="grip-v grip-t"></div>
    <div class="ticks">
      <div class="playhead">1</div>
      <div class="tk"><span>5</span></div><div class="tk"><span>10</span></div><div class="tk"><span>15</span></div><div class="tk"><span>20</span></div><div class="tk"><span>25</span></div><div class="tk"><span>30</span></div><div class="tk"><span>35</span></div><div class="tk"><span>40</span></div><div class="tk"><span>45</span></div><div class="tk"><span>50</span></div><div class="tk"><span>55</span></div><div class="tk"><span>60</span></div><div class="tk"><span>65</span></div><div class="tk"><span>70</span></div><div class="tk"><span>75</span></div><div class="tk"><span>80</span></div><div class="tk"><span>85</span></div><div class="tk"><span>90</span></div><div class="tk"><span>95</span></div><div class="tk"><span>100</span></div><div class="tk"><span>105</span></div><div class="tk"><span>110</span></div><div class="tk"><span>115</span></div><div class="tk"><span>120</span></div>
    </div>
    <div class="cur-frame">1</div>
    <div class="playback">
      <svg><use href="#b1"/></svg><svg><use href="#b2"/></svg><svg><use href="#b3"/></svg><svg><use href="#b4"/></svg><svg><use href="#b5"/></svg><svg><use href="#b6"/></svg><svg><use href="#b7"/></svg><svg><use href="#b8"/></svg>
    </div>
  </section>

  <section class="range">
    <div class="grip-v grip-t"></div>
    <div class="fld f96">1</div>
    <div class="fld f96">1</div>
    <div class="slider-track">
      <div class="slider"><i class="hd hd-l"></i><span>1</span><span class="end">120</span><i class="hd hd-r"></i></div>
    </div>
    <div class="fld f96">120</div>
    <div class="fld f96">200</div>
    <i class="sep sep-r1"></i>
    <svg class="bm"><use href="#bm"/></svg>
    <svg class="tiny-r"><use href="#tri-r"/></svg>
    <i class="sep sep-r2"></i>
    <div class="combo fps"><span>24 fps</span><i class="combo-arrow"></i></div>
    <svg class="ri ri-loop"><use href="#loop"/></svg>
    <svg class="ri ri-cache"><use href="#cache"/></svg>
    <i class="sep sep-r3"></i>
    <svg class="ri"><use href="#sound"/></svg>
    <svg class="ri ri-timer"><use href="#timer"/></svg>
    <svg class="ri ri-run"><use href="#runner"/></svg>
  </section>

  <footer class="helpline">
    <div class="grip-v grip-t"></div>
    <span class="q">?</span>
    <span class="msg">Create Pin from selected cloth</span>
  </footer>

  <div class="menu">
    <div class="tearoff"><i></i></div>
    <div class="mi">Load zls file</div>
    <div class="ml"><span>Create</span></div>
    <div class="mi">Create Simulation Object</div>
    <div class="mi hi">Create Pin</div>
    <div class="ml"><span>Delete</span></div>
    <div class="mi">Remove Simulation from Selection</div>
    <div class="mi">Delete Entire Simulation System</div>
    <div class="ml"><span>License</span></div>
    <div class="mi off">Activate</div>
    <div class="mi">Deactivate</div>
    <div class="ml"><span>Help</span></div>
    <div class="mi">About</div>
    <div class="mi">Manual</div>
    <div class="mi">Community</div>
    <div class="mi">Check Update</div>
  </div>

  <svg class="callout-lines" viewBox="0 0 1945 1084" width="1945" height="1084">
    <path fill="none" stroke="#fff" stroke-width="2" d="M331 334 885 118M1136 143 930 417"/>
  </svg>
  <div class="callout"><div class="callout-side"></div><div class="callout-blue">Create Pin</div></div>
</div>
<script src="script.js"></script>
</body>
</html>
```

FILE: styles.css
```css
*{box-sizing:border-box}
html,body{margin:0;padding:0;background:#444}
body{width:1945px;height:1084px;overflow:hidden;font:12px/1.2 "Open Sans","Liberation Sans",sans-serif;color:#ccc}
.defs{position:absolute;width:0;height:0}
i{display:block;font-style:normal}
button{font:inherit;color:inherit;border:0;padding:0}
ul{list-style:none;margin:0;padding:0}
hr{border:0;margin:0}

.app{position:relative;width:1945px;height:1084px;overflow:hidden;background:#444;display:flex;flex-direction:column;border-left:2px solid #0a78d8;border-bottom:2px solid #1a72c0;border-top:1px solid #24537a}

.menubar{height:27px;display:flex;align-items:center;flex:none}
.home{width:16px;height:16px;margin:1px 15px 0 8px;flex:none}
.mainmenu{display:flex;align-items:stretch;height:27px;gap:16.5px;color:#d0d0d0}
.mainmenu span{display:flex;align-items:center;padding-top:2px}
.mainmenu .on{background:#5285a6;color:#e8e8e8;padding:2px 6px 0;margin:0 -6px}
.workspace{margin-left:auto;display:flex;align-items:center;color:#bbb;padding-top:1px}
.ws-label{margin-right:5px}
.ws-lock{width:12px;height:20px;margin:0 11px 0 10px}
.combo{display:flex;align-items:center;background:#5a5a5a;color:#ccc;border-radius:2px;position:relative}
.combo span{padding-left:4px;flex:1}
.combo-arrow{width:20px;height:100%;background:#666;position:relative;margin-left:1px}
.combo-arrow::after{content:"";position:absolute;left:5px;top:50%;margin-top:-3px;border:5px solid transparent;border-top:7px solid #ccc;border-bottom:0}
.ws-combo{width:208px;height:21px}

.statusline{height:35px;flex:none;display:flex;align-items:center;padding-bottom:3px;position:relative}
.grip-v{width:4px;background:radial-gradient(circle,#777 0 .8px,transparent 1px) 0 0/3px 3px;flex:none}
.statusline>.grip-v{height:24px;margin-left:3px}
.mode-combo{width:106px;height:22px;margin-left:7px}
.sep{width:3px;height:22px;background:#8a8a8a;border-radius:2px;flex:none;opacity:.9}
.statusline>.sep:first-of-type{margin:0 11px}
.st-icons{display:flex;align-items:center;margin-left:-1px}
.st-icons svg{width:25px;height:24px;padding:2px}
.st-icons .tiny{width:25px;padding:2px 8px}
.st-icons .sep-slot{margin:0 11px}
.st-icons .sel{background:#5285a6}
.mini-down{width:0;height:0;border:4px solid transparent;border-top:6px solid #8a8a8a;border-bottom:0;margin:0 6px 0 5px}
.dark-box{background:#3a3a3a;height:23px;line-height:23px;padding-left:6px;border-radius:2px;color:#ccc;flex:none}
.live{width:107px}
.sep-live{margin:0 15px 0 13px}
.mini-sym{margin:0 6px 0 3px}
.sym{width:130px}
.st-right{position:absolute;left:1140px;right:0;top:0;height:32px;display:flex;align-items:center}
.coord{width:18px;height:22px;margin:0 10px 0 18px}
.xyz{color:#aaa;font-size:11.5px;width:12px}
.xyz-box{width:40px;height:21px;background:#2f2f2f;border-radius:2px;margin-right:3px}
.sep-xyz{margin:0 11px 0 9px}
.big-combo{width:163px;height:29px;background:#5a5a5a;margin-top:4px;position:relative}
.big-arrow{position:absolute;right:5px;top:9px;border:5px solid transparent;border-top:7px solid #eee;border-bottom:0}
.panel-icons{margin-left:auto;display:flex;margin-right:4px}
.panel-icons svg{width:25px;height:24px;padding:1px}
.panel-icons .sel{background:#5285a6}

.shelf{height:77px;flex:none;display:flex;padding-top:3px;border-top:2px solid #3a3a3a;position:relative}
.grip-tall{height:70px;margin:1px 3px 0 4px}
.shelf-side{width:22px;height:69px;background:#363636;margin:2px 6px 0 3px;display:flex;flex-direction:column;align-items:center;justify-content:space-around;flex:none}
.hamb{width:12px;height:7px;border-top:2px solid #aaa;border-bottom:2px solid #aaa;background:#aaa}
.gear{width:10px;height:10px;border-radius:50%;border:3px solid #bbb}
.shelf-main{flex:1;display:flex;flex-direction:column;min-width:0}
.tabs{display:flex;height:18px;margin-top:4px;gap:2px;overflow:hidden;flex:none}
.tabs span{flex:none;justify-content:center;background:#404040;color:#999;border:1px solid #3a3a3a;border-bottom:0;border-radius:3px 3px 0 0;display:flex;align-items:center;white-space:nowrap}
.tabs .on{background:#4b4b4b;color:#e6e6e6}
.tabs .w123{width:123px}
.tabs .w112{width:112px}
.tabs .w85{width:85px}
.tabs .w75{width:75px}
.tabs .w88{width:88px}
.tabs .w90{width:90px}
.tabs .w42{width:42px;margin-left:1px}
.tabs .w94{width:94px}
.tabs .w74{width:74px}
.tabs .pad{padding:0 14px}
.tabs .hid{padding:0 15px}
.tabs .mg{padding:0 15px}
.shelf-icons{flex:1;display:flex;align-items:center;height:50px;padding:0 0 6px 2px;position:relative;background:#444}
.shelf-icons svg{width:37.8px;height:32px;padding:0 3px;flex:none}
.sh-sep{width:37.8px;height:40px;flex:none;position:relative}
.sh-sep::after{content:"";position:absolute;left:18px;top:0;width:2px;height:40px;background:#888}
.opt{position:relative;flex:none}
.opt::after{content:"";position:absolute;right:3px;bottom:0;border-left:7px solid transparent;border-bottom:7px solid #ccc}
.opt svg{display:block}
.bracket{width:37.8px;height:37px;flex:none;display:flex;align-items:center;background:
 linear-gradient(#1fc01f,#1fc01f) 0 0/6px 2px no-repeat,linear-gradient(#1fc01f,#1fc01f) 0 0/2px 100% no-repeat,linear-gradient(#1fc01f,#1fc01f) 0 100%/6px 2px no-repeat,
 linear-gradient(#1fc01f,#1fc01f) 100% 0/6px 2px no-repeat,linear-gradient(#1fc01f,#1fc01f) 100% 0/2px 100% no-repeat,linear-gradient(#1fc01f,#1fc01f) 100% 100%/6px 2px no-repeat}
.sh-t{width:37.8px;text-align:center;flex:none;font:40px/1 "Liberation Serif",serif;color:#e3984f}
.sh-svg{width:26px;height:30px;margin:0 6px;flex:none;background:#e3984f;color:#3a3a3a;font:700 12px/30px "Open Sans",sans-serif;text-align:center}
.sh-right{position:absolute;left:1099px;top:0;height:44px;display:flex;align-items:center}
.sh-right svg{width:38px}
.sh-right .sh-sep{width:38px}
.shelf-scroll{width:14px;margin:14px 9px 0 9px;flex:none;display:flex;flex-direction:column;align-items:center;gap:6px}
.shelf-scroll .up{border:6px solid transparent;border-bottom:8px solid #aaa;border-top:0;margin-top:3px}
.shelf-scroll .knob{width:12px;height:18px;background:#666;border-radius:6px}
.shelf-scroll .down{border:6px solid transparent;border-top:8px solid #aaa;border-bottom:0}

.work{height:832px;flex:none;display:flex;position:relative}
.toolbox{width:49px;flex:none;display:flex;flex-direction:column;align-items:center;position:relative;background:#444;border-right:1px solid #3b3b3b}
.grip-h{height:4px;background:radial-gradient(circle,#777 0 .8px,transparent 1px) 0 0/3px 3px}
.toolbox>.grip-h{width:40px;margin:4px 0 0 0}
.tool{width:40px;height:40px;display:flex;align-items:center;justify-content:center;flex:none}
.tool svg{width:32px;height:32px}
.tool:nth-child(2){margin-top:7px}
.tool.sel{background:#5285a6}
.tool-rule{width:40px;height:2px;background:#888;flex:none}
.rule-a{margin-top:87px}
.lay{width:32px;height:31px;flex:none}
.rule-a + .lay{margin-top:9px}
.lay + .lay{margin-top:9.5px}
.lay-out{width:40px;height:40px;margin-top:4px;background:#5285a6;flex:none}
.lay-out svg{width:40px;height:40px;display:block}
.rule-b{margin-top:6px}
.search-btn{width:40px;height:39px;margin-top:5px;background:
 linear-gradient(#1fc01f,#1fc01f) 0 0/6px 2px no-repeat,linear-gradient(#1fc01f,#1fc01f) 0 0/2px 100% no-repeat,linear-gradient(#1fc01f,#1fc01f) 0 100%/6px 2px no-repeat,
 linear-gradient(#1fc01f,#1fc01f) 100% 0/6px 2px no-repeat,linear-gradient(#1fc01f,#1fc01f) 100% 0/2px 100% no-repeat,linear-gradient(#1fc01f,#1fc01f) 100% 100%/6px 2px no-repeat;display:flex;align-items:center;justify-content:center}
.search-btn svg{width:26px;height:26px}
.mlogo{width:36px;height:32px;margin:auto 2px 9px 0;flex:none}

.outliner{width:439px;margin-left:2px;flex:none;display:flex;flex-direction:column;padding-top:4px}
.panel-tab{width:76px;height:17px;background:#444;color:#ddd;padding-left:14px;line-height:17px;border-radius:3px 3px 0 0;flex:none}
.out-body{flex:1;display:flex;flex-direction:column;background:#444;min-height:0}
.out-menu{height:27px;display:flex;gap:16px;padding-left:10px;align-items:center;flex:none;color:#ccc}
.out-search{height:24px;display:flex;align-items:center;flex:none}
.out-search svg{width:18px;height:18px;margin:0 6px 0 6px;flex:none}
.search-field{margin-left:2px;width:401px;height:24px;background:#2b2b2b;border-radius:2px;display:flex;align-items:center;justify-content:space-between;padding:2px 8px 0 4px;color:#888}
.search-arrow{border:6px solid transparent;border-top:7px solid #bbb;border-bottom:0}
.out-list-wrap{flex:1;display:flex;background:#363636;margin-left:3px;min-height:0}
.out-list{width:418px;flex:none}
.out-list li{height:21.8px;display:flex;align-items:center;color:#c5c5c5}
.out-list .dim{color:#6a6a6a}
.out-list .sel{background:#3e4b5a;color:#d5d5d5}
.pc{width:12px;height:12px;margin:0 12px 0 4px;flex:none}
.pb{width:12px;height:12px;margin:0 0 0 -8px;flex:none}
.ic{width:18px;height:18px;margin:0 3px 0 9px;flex:none}
.ic-z{margin-left:4px}
.out-list .dim .ic{width:16px;height:10px;margin:0 5px 0 10px}
.vscroll{flex:1;display:flex;flex-direction:column;align-items:center;padding-top:3px}
.sc-up{border:5px solid transparent;border-bottom:6px solid #aaa;border-top:0}
.sc-thumb{width:10px;flex:1;margin:3px 0;background:#5a5a5a;border-radius:5px}
.sc-down{border:4px solid transparent;border-top:5px solid #aaa;border-bottom:0}
.hscroll{height:13px;flex:none;display:flex;align-items:center;margin-left:3px;background:#363636;gap:3px;padding:0 4px}
.sc-left{border:5px solid transparent;border-right:6px solid #aaa;border-left:0}
.sc-hthumb{width:391px;height:11px;background:#5a5a5a;border-radius:5px}
.sc-right{border:5px solid transparent;border-left:6px solid #aaa;border-right:0}
.grip-out{width:140px;margin:7px auto 0}

.viewport{width:921px;margin:5px 0 4px 5px;flex:none;display:flex;flex-direction:column;border:1px solid #7d7d7d;background:#5b5b5b;position:relative}
.vp-menu{height:21px;background:#484848;display:flex;gap:17px;padding-left:8px;align-items:center;flex:none;color:#ccc}
.vp-tools{height:20px;background:#444;display:flex;align-items:center;flex:none;position:relative}
.vp-tools>.sep{margin-left:4px;height:18px;width:2px}
.vp-icons{display:flex;align-items:center;margin-left:3px}
.vp-icons svg{width:20.7px;height:20px;padding:2px}
.vp-icons .sep{height:18px;width:2px;margin:0 7px 0 7px}
.vp-icons .sel{background:#5285a6}
.vp-right{position:absolute;left:632px;top:0;height:20px;display:flex;align-items:center}
.vp-right>svg{width:18px;height:18px;padding:1px}
.vp-right .sep{height:18px;width:2px;margin:0 8px}
.vp-right .ap{width:17px;height:17px;margin-right:0}
.num{width:41px;height:15px;background:#2f2f2f;border-radius:2px;text-align:center;font-size:11.5px;line-height:15px;color:#ccc;margin-right:6px}
.on-btn{width:20px;height:19px;background:#5285a6;display:flex;align-items:center;justify-content:center;margin:0 3px 0 3px}
.on-btn b{width:15px;height:15px;border-radius:50%;background:#2a8a94;border:1px solid #7fe0e8;color:#123;font-size:6px;line-height:13px;text-align:center;font-weight:700}
.aces{width:78px;height:18px;background:#5a5a5a;font-size:11.5px;line-height:18px;white-space:nowrap;padding-left:3px;color:#ccc;overflow:hidden}
.vp-scene{flex:1;position:relative;overflow:hidden}
.mesh{position:absolute;left:0;top:0}
.hud{position:absolute;left:14px;top:-5px;border-collapse:collapse;font-size:11px;font-weight:600;color:#dcdcdc}
.hud th{font-weight:600;text-align:left;width:52px;padding:0;height:21.8px}
.hud td{text-align:right;padding:0}
.hud td:nth-child(2){width:72px}
.hud td:nth-child(3){width:70px}
.hud td:nth-child(4){width:73px}
.cube{position:absolute;left:818px;top:26px;width:76px;height:82px}
.cube-t{font:700 8px "Open Sans",sans-serif;fill:#6f6f6f;text-anchor:middle}
.axis{position:absolute;left:14px;top:729px;width:30px;height:30px}
.cam-name{position:absolute;left:433px;top:758px;font-weight:700;font-size:11px;color:#e6e6e6}

.attr{width:500px;margin:5px 0 2px 6px;flex:none;display:flex;flex-direction:column}
.attr-menu{height:20px;display:flex;padding-left:10px;align-items:center;flex:none;color:#ccc;gap:16.500px}
.attr-tabs{height:17px;margin:21px 6px 0 8px;background:#353535;display:flex;gap:2px;flex:none}
.attr-tabs span{padding:0 16px;background:#3f3f3f;color:#8f8f8f;display:flex;align-items:center;border-radius:3px 3px 0 0}
.attr-tabs .on{background:#444;color:#e0e0e0;padding:0 16px}
.attr-head{height:100px;padding-top:11px;display:flex;flex:none;position:relative}
.attr-head label{position:absolute;left:132px;top:39px;color:#aaa}
.mesh-field{margin:24px 0 0 173px;width:167px;height:24px;line-height:24px;background:#2b2b2b;border-radius:2px;padding-left:6px;color:#ccc;flex:none}
.nav-icons{width:50px;display:flex;flex-direction:column;align-items:center;gap:6px;margin-top:11px;flex:none}
.nav-icons svg{width:20px;height:18px}
.head-btns{width:76px;display:flex;flex-direction:column;gap:2px;flex:none;margin-left:-4px}
.head-btns button{height:22px;background:#5a5a5a;color:#e0e0e0;border-radius:1px}
.head-btns .off{background:#4e4e4e;color:#7a7a7a}
.pair{display:flex;gap:2px}
.pair button{flex:1}
.frames{margin:0 10px 0 12px;display:flex;flex-direction:column;gap:3px;flex:none}
.frame{height:21px;line-height:21px;background:#5a5a5a;border-radius:2px;padding-left:38px;font-weight:600;font-size:11.5px;color:#c8c8c8;position:relative}
.frame::before{content:"";position:absolute;left:11px;top:3px;border:5px solid transparent;border-left:7px solid #ddd;border-right:0}
.notes{margin-top:auto;flex:none}
.grip-notes{width:320px;margin-left:15px;opacity:.7}
.notes-clip{height:11px;overflow:hidden;padding-left:15px;font-weight:600;font-size:11px;color:#ccc}
.attr-btns{display:flex;gap:2px;margin:5px 2px 3px 2px;flex:none}
.attr-btns button{height:28px;background:#5a5a5a;color:#ddd;flex:none}
.attr-btns button:nth-child(1){width:162px}
.attr-btns button:nth-child(2){width:167px}
.attr-btns button:nth-child(3){width:163px}

.sidetabs{flex:1;display:flex;flex-direction:column;background:#404040;align-items:center;color:#aaa;position:relative;padding-top:17px}
.sidetabs span{writing-mode:vertical-rl;font-size:12px;white-space:nowrap}
.s2{margin-top:30px;letter-spacing:.45px;padding-top:0}
.s3{margin-top:31px;color:#e0e0e0}

.timeline{height:43px;flex:none;display:flex;align-items:flex-start;padding-top:4px;border-top:2px solid #3b3b3b}
.grip-t{height:30px;margin:0 6px 0 3px}
.ticks{width:1608px;height:33px;background:#2b2b2b;display:flex;padding-left:61px;position:relative;flex:none}
.playhead{position:absolute;left:9px;top:0;width:11px;height:33px;background:#555;color:#eee;font-size:11px;padding:14px 0 0 2px}
.tk{width:66.350px;flex:none;display:flex;flex-direction:column;position:relative}
.tk span{color:#777;font-size:11.5px;padding-left:3px;height:15px;line-height:13px}
.tk::after{content:"";position:absolute;left:0;bottom:0;width:1px;height:18px;background:#8a8a8a}
.cur-frame{width:95px;height:23px;margin:6px 0 0 8px;background:#2b2b2b;border-radius:2px;line-height:23px;padding-left:4px;color:#ccc;flex:none;font-size:11.5px}
.playback{display:flex;margin:7px 0 0 8px}
.playback svg{width:25px;height:20px;padding:1px 3px;flex:none}

.range{height:37px;flex:none;display:flex;align-items:center;padding:3px 0 0;border-top:2px solid #3b3b3b}
.fld{height:27px;background:#2b2b2b;border-radius:2px;line-height:27px;padding-left:6px;color:#ccc;flex:none}
.f96{width:96px}
.range .fld+.fld{margin-left:9px}
.slider-track{width:1129px;height:27px;background:#3d3d3d;margin:0 8px 0 7px;padding:2px 7px;flex:none}
.slider{width:681px;height:22px;background:#5c5c5c;border-radius:4px;display:flex;align-items:center;padding:0 4px;gap:5px;color:#ccc;font-size:11.5px}
.slider .end{margin-left:auto}
.hd{width:16px;height:18px;background:#9a9a9a;border-radius:4px;flex:none}
.hd-r{background:#8a8a8a}
.sep-r1{width:2px;height:22px;margin:0 12px 0 7px}
.range .bm{width:20px;height:26px;flex:none}
.tiny-r{width:8px;height:22px;margin-left:5px;flex:none}
.sep-r2{width:2px;height:22px;margin:0 21px 0 12px}
.fps{width:104px;height:21px;flex:none}
.fps span{font-size:11.5px}
.ri{width:22px;height:22px;flex:none;margin-left:8px}
.ri-loop{margin-left:13px}
.ri-cache{margin-left:12px}
.sep-r3{width:2px;height:22px;margin:0 4px 0 11px}
.ri-timer{margin-left:9px}
.ri-run{margin-left:11px}

.helpline{flex:1;display:flex;align-items:center;border-top:2px solid #3b3b3b;padding-top:2px}
.helpline .grip-t{height:22px;margin:0 7px 0 3px}
.q{width:17px;height:24px;border-radius:50%;background:#8fb33a;color:#2a3a10;font-weight:700;font-size:14px;text-align:center;line-height:24px;flex:none}
.msg{font-size:10.3px;margin-left:9px;color:#d5d5d5}

.menu{position:absolute;left:860px;top:27px;width:275px;height:379px;background:linear-gradient(90deg,#454545 21px,#525252 21px);display:flex;flex-direction:column;color:#e0e0e0;font-size:12.5px}
.tearoff{height:19px;background:#3e3e3e;padding:8px 0 0 0;flex:none}
.tearoff i{height:3px;background:radial-gradient(circle,#777 0 .8px,transparent 1px) 0 0/3px 3px}
.mi{height:25.7px;flex:none;line-height:25.7px;padding-left:21px;margin-left:21px}
.mi.off{color:#7c7c7c}
.mi.hi{background:#4a6078;outline:2px solid #fff;outline-offset:-2px;color:#dfe7ee}
.ml{height:19.6px;flex:none;color:#8a8a8a;display:flex;align-items:center;padding-left:5px;margin-left:21px;gap:8px;font-size:12.5px}
.ml::after{content:"";flex:1;height:1px;background:#676767}

.callout-lines{position:absolute;left:-2px;top:-1px;pointer-events:none}
.callout{position:absolute;left:328px;top:333px;width:601px;height:84px;border:3px solid #fff;background:#4c4a4a;display:flex}
.callout-side{width:69px;background:#424242;flex:none}
.callout-blue{flex:1;height:69px;margin-top:3px;margin-right:2px;background:#5082a6;color:#dde4ea;font-size:36.5px;line-height:73px;padding-left:50px;text-shadow:0 0 2px #dde4ea;filter:blur(.6px)}
```

FILE: script.js
```js
// Draws the 31x31 triangulated plane in perspective inside the viewport.
(function () {
  var svg = document.getElementById('mesh');
  var NS = 'http://www.w3.org/2000/svg';
  var ox = 498, oy = 187; // viewport scene origin on the page
  var T = [956, 372], R = [1373, 538], B = [956, 903], L = [541, 538];

  // unit square -> quad homography
  var dx1 = R[0] - B[0], dx2 = L[0] - B[0], sx = T[0] - R[0] + B[0] - L[0];
  var dy1 = R[1] - B[1], dy2 = L[1] - B[1], sy = T[1] - R[1] + B[1] - L[1];
  var det = dx1 * dy2 - dx2 * dy1;
  var g = (sx * dy2 - dx2 * sy) / det, h = (dx1 * sy - sx * dy1) / det;
  var a = R[0] - T[0] + g * R[0], b = L[0] - T[0] + h * L[0], c = T[0];
  var d = R[1] - T[1] + g * R[1], e = L[1] - T[1] + h * L[1], f = T[1];
  function pt(u, v) {
    var w = g * u + h * v + 1;
    return [(a * u + b * v + c) / w - ox, (d * u + e * v + f) / w - oy];
  }

  var N = 30, i, j, p = [];
  for (i = 0; i <= N; i++) { p[i] = []; for (j = 0; j <= N; j++) p[i][j] = pt(i / N, j / N); }
  function s(q) { return q[0].toFixed(1) + ' ' + q[1].toFixed(1); }

  var poly = document.createElementNS(NS, 'path');
  poly.setAttribute('d', 'M' + s(p[0][0]) + 'L' + s(p[N][0]) + 'L' + s(p[N][N]) + 'L' + s(p[0][N]) + 'Z');
  poly.setAttribute('fill', '#7f7f7f');
  svg.appendChild(poly);

  var dl = '';
  for (i = 0; i <= N; i++) for (j = 0; j <= N; j++) {
    if (i < N) dl += 'M' + s(p[i][j]) + 'L' + s(p[i + 1][j]);
    if (j < N) dl += 'M' + s(p[i][j]) + 'L' + s(p[i][j + 1]);
    if (i < N && j < N) dl += 'M' + s(p[i][j]) + 'L' + s(p[i + 1][j + 1]);
  }
  var lines = document.createElementNS(NS, 'path');
  lines.setAttribute('d', dl);
  lines.setAttribute('fill', 'none');
  lines.setAttribute('stroke', '#5fd0e6');
  lines.setAttribute('stroke-width', '1.3');
  svg.appendChild(lines);

  var dv = '';
  for (i = 0; i <= N; i++) for (j = 0; j <= N; j++) {
    var q = p[i][j];
    dv += 'M' + (q[0] - 1.75).toFixed(1) + ' ' + (q[1] - 1.75).toFixed(1) + 'h3.5v3.5h-3.5z';
  }
  var verts = document.createElementNS(NS, 'path');
  verts.setAttribute('d', dv);
  verts.setAttribute('fill', '#d610d6');
  svg.appendChild(verts);

  // manipulator
  var g2 = document.createElementNS(NS, 'g');
  g2.setAttribute('transform', 'translate(' + (-ox) + ' ' + (-oy) + ')');
  g2.innerHTML =
    '<path stroke="#18e018" stroke-width="1.5" d="M1060 463V438"/><path fill="#18e018" d="M1063 415l7 26-7 0-6 0z"/>' +
    '<path fill="#f4ec90" d="M1030 458l12-6v15l-12 5z"/>' +
    '<path fill="#5060e0" fill-opacity=".85" stroke="#3050e0" d="M1083 452l15 6v15l-15-5z"/>' +
    '<path fill="none" stroke="#62c6dc" stroke-width="1.2" d="M1047 472l21-1v22h-21z"/><path fill="#f4ec90" d="M1056 481h5v5h-5z"/>' +
    '<path stroke="#e01818" stroke-width="1.5" d="M1075 490l21 7"/><path fill="#ee1010" d="M1117 509l-23-13-2 10z"/>' +
    '<path stroke="#1010e0" stroke-width="1.5" d="M1045 490l-20 9"/><path fill="#1010e8" d="M1009 509l18-14 3 8z"/>' +
    '<path fill="#18e060" d="M1063 503l13 7-13 7-13-7z"/>';
  svg.appendChild(g2);
})();
```
